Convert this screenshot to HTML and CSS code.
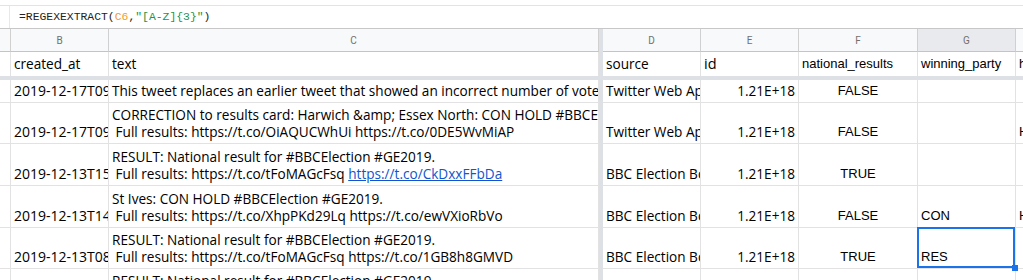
FILE: index.html
```html
<!DOCTYPE html>
<html>
<head>
<meta charset="utf-8">
<link rel="stylesheet" href="styles.css">
</head>
<body>
<div class="formula-bar">
  <div class="fx-sep"></div>
  <div class="formula"><span>=REGEXEXTRACT(</span><span class="ref">C6</span><span>,</span><span class="str">"[A-Z]{3}"</span><span>)</span></div>
</div>
<div class="sheet">
  <div class="row letters">
    <div class="cell"></div>
    <div class="cell">B</div>
    <div class="cell">C</div>
    <div class="band"></div>
    <div class="cell">D</div>
    <div class="cell">E</div>
    <div class="cell">F</div>
    <div class="cell active">G</div>
    <div class="cell">H</div>
  </div>
  <div class="row r1">
    <div class="cell"></div>
    <div class="cell cal">created_at</div>
    <div class="cell cal">text</div>
    <div class="band"></div>
    <div class="cell cal">source</div>
    <div class="cell cal big">id</div>
    <div class="cell ari">national_results</div>
    <div class="cell ari">winning_party</div>
    <div class="cell ari">hashtags</div>
  </div>
  <div class="hband"></div>
  <div class="row r2">
    <div class="cell"></div>
    <div class="cell cal date">2019-12-17T09:43:12</div>
    <div class="cell cal">This tweet replaces an earlier tweet that showed an incorrect number of votes for Labour</div>
    <div class="band"></div>
    <div class="cell cal">Twitter Web App</div>
    <div class="cell cal num">1.21E+18</div>
    <div class="cell ari ctr">FALSE</div>
    <div class="cell ari"></div>
    <div class="cell ari"></div>
  </div>
  <div class="row r3">
    <div class="cell"></div>
    <div class="cell cal date">2019-12-17T09:40:02</div>
    <div class="cell cal"><span>CORRECTION to results card: Harwich &amp;amp; Essex North: CON HOLD #BBCElection</span><span> Full results: https://t.co/OiAQUCWhUi https://t.co/0DE5WvMiAP</span></div>
    <div class="band"></div>
    <div class="cell cal">Twitter Web App</div>
    <div class="cell cal num">1.21E+18</div>
    <div class="cell ari ctr">FALSE</div>
    <div class="cell ari"></div>
    <div class="cell ari">HOLD</div>
  </div>
  <div class="row r4">
    <div class="cell"></div>
    <div class="cell cal date">2019-12-13T15:02:45</div>
    <div class="cell cal"><span>RESULT: National result for #BBCElection #GE2019.</span><span> Full results: https://t.co/tFoMAGcFsq <a class="link">https://t.co/CkDxxFFbDa</a></span></div>
    <div class="band"></div>
    <div class="cell cal">BBC Election Bot</div>
    <div class="cell cal num">1.21E+18</div>
    <div class="cell ari ctr">TRUE</div>
    <div class="cell ari"></div>
    <div class="cell ari"></div>
  </div>
  <div class="row r5">
    <div class="cell"></div>
    <div class="cell cal date">2019-12-13T14:21:09</div>
    <div class="cell cal"><span>St Ives: CON HOLD #BBCElection #GE2019.</span><span> Full results: https://t.co/XhpPKd29Lq https://t.co/ewVXioRbVo</span></div>
    <div class="band"></div>
    <div class="cell cal">BBC Election Bot</div>
    <div class="cell cal num">1.21E+18</div>
    <div class="cell ari ctr">FALSE</div>
    <div class="cell ari">CON</div>
    <div class="cell ari">HOLD</div>
  </div>
  <div class="row r6">
    <div class="cell"></div>
    <div class="cell cal date">2019-12-13T08:11:37</div>
    <div class="cell cal"><span>RESULT: National result for #BBCElection #GE2019.</span><span> Full results: https://t.co/tFoMAGcFsq https://t.co/1GB8h8GMVD</span></div>
    <div class="band"></div>
    <div class="cell cal">BBC Election Bot</div>
    <div class="cell cal num">1.21E+18</div>
    <div class="cell ari ctr">TRUE</div>
    <div class="cell ari selected">RES</div>
    <div class="cell ari"></div>
  </div>
  <div class="row r7">
    <div class="cell"></div>
    <div class="cell cal date">2019-12-13T07:55:10</div>
    <div class="cell cal"><span>RESULT: National result for #BBCElection #GE2019.</span><span> Full results: https://t.co/tFoMAGcFsq https://t.co/AbCdEfGhIj</span></div>
    <div class="band"></div>
    <div class="cell cal">BBC Election Bot</div>
    <div class="cell cal num">1.21E+18</div>
    <div class="cell ari ctr">TRUE</div>
    <div class="cell ari">RES</div>
    <div class="cell ari"></div>
  </div>
</div>
</body>
</html>
```

FILE: styles.css
```css
html, body {
  margin: 0;
  padding: 0;
  background: #ffffff;
  overflow: hidden;
  width: 1023px;
  height: 280px;
}

.formula-bar {
  margin-top: 5px;
  height: 22px;
  border-top: 1px solid #e3e3e3;
  display: flex;
  align-items: center;
}

.fx-sep {
  width: 10px;
  height: 22px;
  border-right: 1px solid #e8e8e8;
  box-sizing: border-box;
}

.formula {
  padding-left: 9px;
  font-family: "Liberation Mono", monospace;
  font-size: 11.4px;
  color: #222;
  white-space: pre;
  line-height: 22px;
}

.formula .ref { color: #f29a2e; }
.formula .str { color: #1e9448; }

.sheet {
  display: flex;
  flex-direction: column;
  width: 1114px;
}

.row {
  display: grid;
  grid-template-columns: 11px 98px 490px 4px 98px 98px 119px 98px 98px;
}

.cell {
  box-sizing: border-box;
  border-right: 1px solid #e2e2e2;
  border-bottom: 1px solid #e2e2e2;
  padding: 0 3px 3px 3px;
  display: flex;
  flex-direction: column;
  justify-content: flex-end;
  overflow: hidden;
  white-space: pre;
  color: #000;
  position: relative;
}

.band {
  background: #dde1e6;
}

.hband {
  height: 4px;
  background: #dde1e6;
}

.letters {
  border-top: 1px solid #c7c7c7;
}

.letters .cell {
  height: 23px;
  background: #f8f9fa;
  border-right-color: #d0d0d0;
  border-bottom-color: #c4c4c4;
  font-family: "Roboto", "Liberation Sans", sans-serif;
  font-size: 10px;
  color: #707070;
  justify-content: center;
  align-items: center;
  padding: 0;
}

.letters .cell.active {
  background: #e8eaed;
}

.r1 .cell { height: 24px; border-bottom: none; padding-bottom: 4px; }
.r2 .cell { height: 23px; }
.r3 .cell { height: 41px; }
.r4 .cell { height: 42px; }
.r5 .cell { height: 42px; }
.r6 .cell { height: 41px; }
.r7 .cell { height: 41px; }

.cal {
  font-family: "Open Sans", "Noto Sans", sans-serif;
  font-size: 13.6px;
  line-height: 17px;
}

.cal.date { font-size: 14px; }

.cal.big { font-size: 14.5px; }

.ari {
  font-family: "Liberation Sans", Arial, sans-serif;
  font-size: 13px;
  line-height: 17px;
}

.num { align-items: flex-end; }
.ctr { align-items: center; }

.link {
  color: #1155cc;
  text-decoration: underline;
}

.selected {
  overflow: visible;
  z-index: 3;
}

.selected::after {
  content: "";
  position: absolute;
  top: -1px;
  left: -1px;
  right: 0;
  bottom: 0;
  border: 2px solid #1a73e8;
}

.selected::before {
  content: "";
  position: absolute;
  right: -3px;
  bottom: -3px;
  width: 6px;
  height: 6px;
  background: #1a73e8;
  z-index: 2;
}
```
